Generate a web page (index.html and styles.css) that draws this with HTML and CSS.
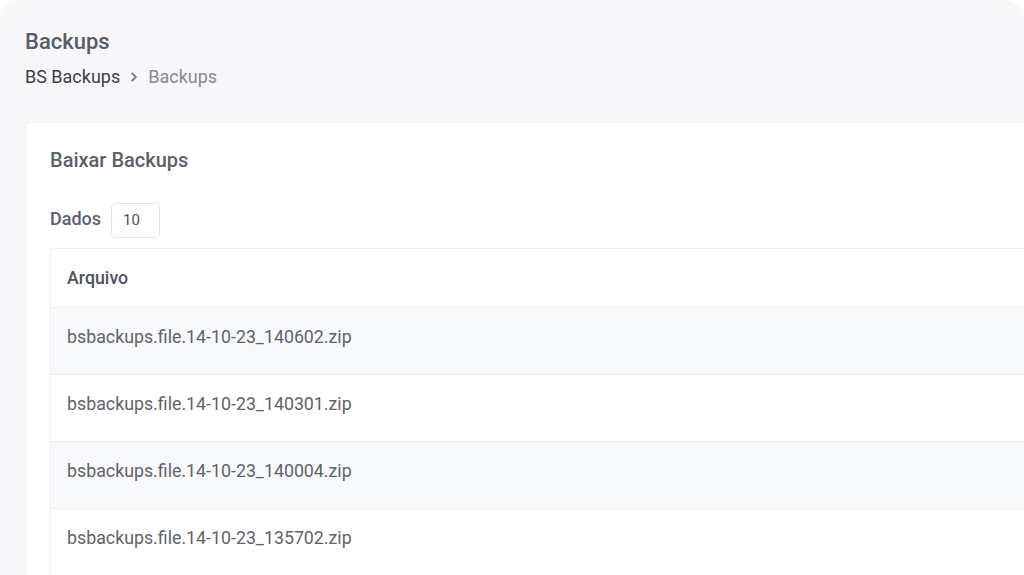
FILE: index.html
```html
<!DOCTYPE html>
<html lang="pt-BR">
<head>
    <meta charset="UTF-8">
    <meta name="viewport" content="width=device-width, initial-scale=1.0">
    <title>Backups</title>
    <link rel="stylesheet" href="styles.css">
</head>
<body>
    <div class="content">
        <h1 class="page-title">Backups</h1>
        <nav class="breadcrumb">
            <span class="crumb">BS Backups</span>
            <svg class="crumb-sep" width="10" height="10" viewBox="0 0 10 10">
                <path d="M3.3 1.6 L6.8 5 L3.3 8.4" fill="none" stroke="#80858e" stroke-width="2.1" stroke-linecap="round" stroke-linejoin="round"/>
            </svg>
            <span class="crumb active">Backups</span>
        </nav>

        <div class="card">
            <h2 class="card-title">Baixar Backups</h2>
            <div class="length-row">
                <label class="length-label">Dados</label>
                <div class="length-input">10</div>
            </div>
            <table class="files">
                <thead>
                    <tr><th>Arquivo</th></tr>
                </thead>
                <tbody>
                    <tr class="odd"><td>bsbackups.file.14-10-23_140602.zip</td></tr>
                    <tr><td>bsbackups.file.14-10-23_140301.zip</td></tr>
                    <tr class="odd"><td>bsbackups.file.14-10-23_140004.zip</td></tr>
                    <tr><td>bsbackups.file.14-10-23_135702.zip</td></tr>
                </tbody>
            </table>
        </div>
    </div>
</body>
</html>
```

FILE: styles.css
```css
html, body {
    margin: 0;
    height: 100%;
    overflow: hidden;
}

body {
    background: #ffffff;
    font-family: Roboto, "Liberation Sans", sans-serif;
}

.content {
    background: #f7f7f9;
    border-radius: 22px 22px 0 0;
    min-height: 100vh;
    padding: 29px 0 0 25px;
    box-sizing: border-box;
    overflow: hidden;
}

.page-title {
    margin: 0;
    font-size: 22px;
    line-height: 26px;
    font-weight: 500;
    color: #585c69;
}

.breadcrumb {
    display: flex;
    align-items: center;
    gap: 9px;
    margin-top: 10px;
    font-size: 18px;
    line-height: 24px;
}

.crumb {
    color: #3c4048;
}

.crumb.active {
    color: #858a94;
}

.card {
    margin-top: 33px;
    margin-right: -40px;
    background: #ffffff;
    border: 1px solid #f0f0f2;
    border-radius: 4px;
    padding: 25px 0 0 24px;
}

.card-title {
    margin: 0;
    font-size: 20px;
    line-height: 24px;
    font-weight: 500;
    color: #5b5f6c;
}

.length-row {
    display: flex;
    align-items: center;
    gap: 10px;
    margin-top: 31px;
}

.length-label {
    font-size: 18px;
    line-height: 22px;
    margin-top: -3px;
    font-weight: 500;
    color: #5b5f6c;
}

.length-input {
    width: 47px;
    height: 33px;
    border: 1px solid #e3e5e8;
    border-radius: 4px;
    font-size: 15px;
    line-height: 33px;
    text-indent: 11px;
    color: #4b4f58;
}

.files {
    margin-top: 10px;
    width: 100%;
    border-collapse: collapse;
    border-left: 1px solid #ecedf0;
}

.files th,
.files td {
    text-align: left;
    font-size: 17.8px;
    line-height: 24px;
    padding-left: 16px;
    border-top: 1px solid #ecedf0;
}

.files th {
    font-weight: 500;
    color: #4f535c;
    padding-top: 17px;
    padding-bottom: 17px;
}

.files td {
    color: #5f636b;
    padding-top: 17px;
    padding-bottom: 25px;
}

.files tr.odd td {
    background: #f8f9fa;
}
```
